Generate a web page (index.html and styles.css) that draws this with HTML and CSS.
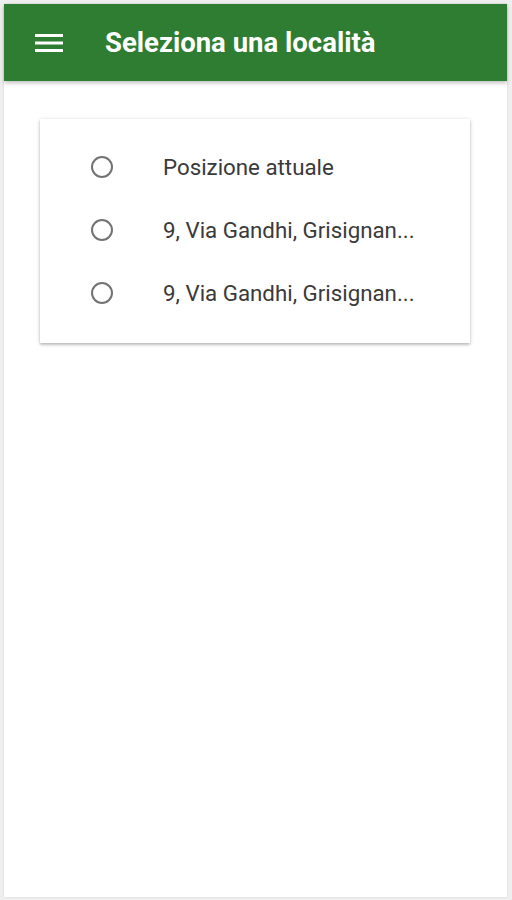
FILE: index.html
```html
<!DOCTYPE html>
<html lang="it">

<head>
    <meta charset="UTF-8">
    <meta name="viewport" content="width=device-width, initial-scale=1.0">
    <title>Seleziona una località</title>
    <link rel="stylesheet" href="styles.css">
</head>

<body>
    <div class="screen">
        <header class="toolbar">
            <button class="menu-btn" aria-label="Menu">
                <svg width="28" height="20" viewBox="0 0 28 20">
                    <rect x="0" y="1" width="28" height="3" fill="#fff"/>
                    <rect x="0" y="8.5" width="28" height="3" fill="#fff"/>
                    <rect x="0" y="16" width="28" height="3" fill="#fff"/>
                </svg>
            </button>
            <h1>Seleziona una località</h1>
        </header>

        <!-- Location list -->
        <div class="card">
            <label class="option">
                <span class="radio"></span>
                <span class="label">Posizione attuale</span>
            </label>
            <label class="option">
                <span class="radio"></span>
                <span class="label">9, Via Gandhi, Grisignan...</span>
            </label>
            <label class="option">
                <span class="radio"></span>
                <span class="label">9, Via Gandhi, Grisignan...</span>
            </label>
        </div>
    </div>
</body>

</html>
```

FILE: styles.css
```css
body {
    margin: 0;
    padding: 4px 5px 3px 4px;
    background-color: #efefef;
    font-family: Roboto, "Noto Sans", sans-serif;
}

.screen {
    height: 893px;
    background-color: #fff;
    box-shadow: 0 0 2px rgba(0, 0, 0, 0.12);
}

.toolbar {
    height: 77px;
    display: flex;
    align-items: center;
    background-color: #2e7d32;
    box-shadow: 0 2px 4px rgba(0, 0, 0, 0.25);
}

.menu-btn {
    display: flex;
    margin-left: 31px;
    padding: 0;
    background: none;
    border: none;
    cursor: pointer;
}

.toolbar h1 {
    margin: 0 0 0 42px;
    color: #fff;
    font-size: 27.5px;
    font-weight: 700;
}

.card {
    margin: 38px 0 0 36px;
    width: 430px;
    padding: 16px 0 19px;
    background-color: #fff;
    box-shadow: 0 1px 4px rgba(0, 0, 0, 0.22), 0 2px 2px rgba(0, 0, 0, 0.12);
}

.option {
    height: 63px;
    display: flex;
    align-items: center;
    cursor: pointer;
}

.radio {
    width: 18px;
    height: 18px;
    margin-left: 51px;
    border: 2px solid #737373;
    border-radius: 50%;
}

.label {
    margin-left: 50px;
    color: #3a3a3a;
    font-size: 22.3px;
}
```
